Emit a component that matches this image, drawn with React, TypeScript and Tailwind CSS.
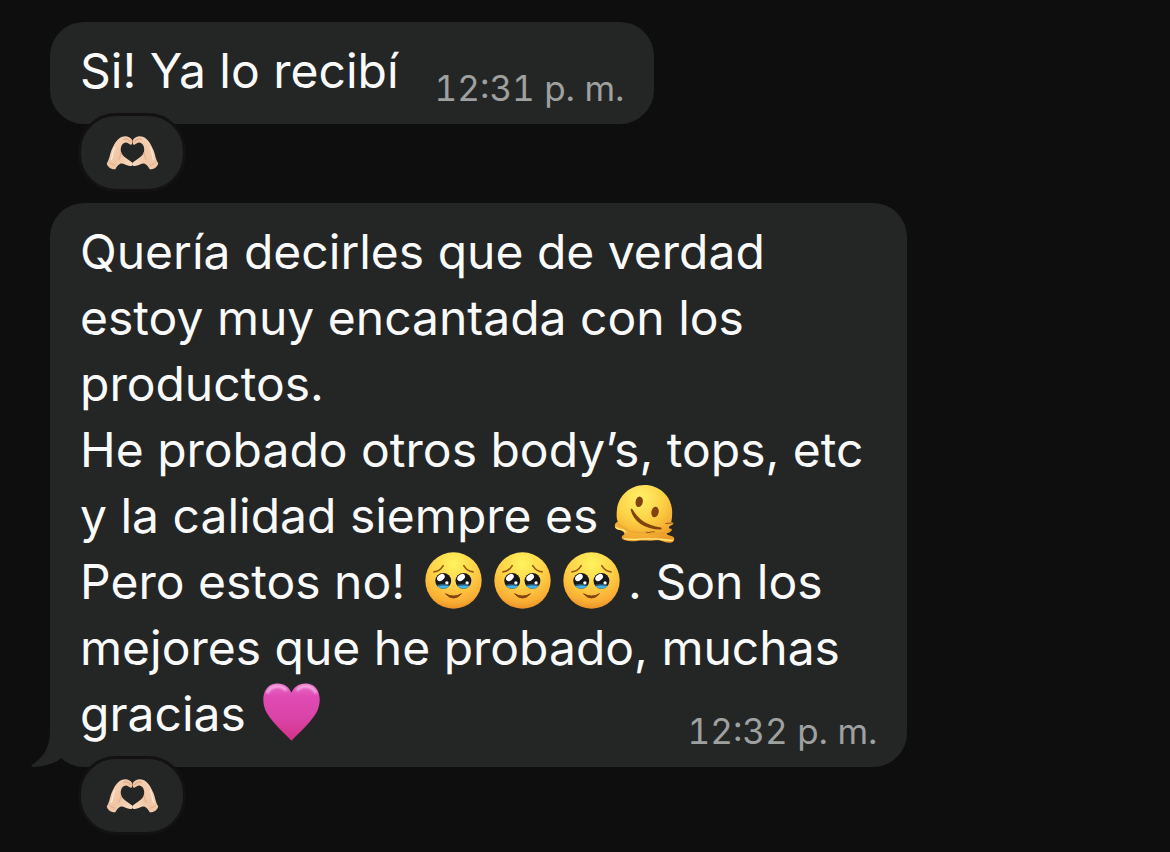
import type { ReactNode } from "react";

function HeartHands() {
  return (
    <svg viewBox="46 44 160 106" className="h-[35px] w-[53px]" role="img" aria-label="Manos formando un corazón">
      <defs>
        <linearGradient id="skin" x1="0" y1="0" x2="1" y2="1">
          <stop offset="0" stopColor="#f8dabf" />
          <stop offset="0.55" stopColor="#f0c5a4" />
          <stop offset="1" stopColor="#fbe0c6" />
        </linearGradient>
        <g id="hand">
          <path
            d="M48 130 C56 119 57 104 62 91 C69 73 80 54 95 49 C106 45 119 49 124 58 C127 64 126 71 122 74 C116 73 112 67 105 67 C94 69 89 81 91 94 C94 109 112 117 125 127 C129 133 125 139 119 138 C108 137 97 128 89 131 C82 134 78 140 74 148 C64 149 51 142 48 130Z"
            fill="url(#skin)"
          />
          <path d="M98 58 C106 53 114 57 121 66" fill="none" stroke="#c48f6e" strokeWidth="2" />
          <path d="M91 96 C91 106 87 112 85 119 M54 126 C61 132 67 134 74 136" fill="none" stroke="#dba885" strokeWidth="2.5" />
          <path d="M72 82 C66 95 66 107 62 118" fill="none" stroke="#ffe8d4" strokeWidth="4" strokeLinecap="round" />
        </g>
      </defs>
      <use href="#hand" />
      <use href="#hand" transform="matrix(-1 0 0 1 252 0)" />
    </svg>
  );
}

function MeltingFace() {
  return (
    <svg viewBox="34 28 184 182" className="-mt-1 inline-block h-[60px] w-[61px] align-middle" role="img" aria-label="Cara derritiéndose">
      <defs>
        <radialGradient id="melt" cx="0.42" cy="0.22" r="0.8">
          <stop offset="0" stopColor="#fff16a" />
          <stop offset="0.5" stopColor="#fdd145" />
          <stop offset="1" stopColor="#ee9c28" />
        </radialGradient>
      </defs>
      <path
        d="M126 31 C173 31 210 67 210 114 C210 126 209 136 207 143 L213 146 C216 151 208 153 202 156 C198 160 201 164 206 164 C211 165 209 171 203 174 L193 178 C193 183 207 184 214 189 C220 198 213 207 201 206 C182 205 175 197 160 199 C142 202 125 198 108 200 C94 202 80 203 67 199 C54 195 54 187 64 182 C67 177 62 171 54 168 C42 168 35 162 36 153 C36 147 42 146 45 142 C41 132 41 122 42 111 C44 66 81 31 126 31Z"
        fill="url(#melt)"
      />
      <path d="M44 145 C48 158 68 158 77 168 C90 179 117 172 138 179 C158 184 170 174 193 178" fill="none" stroke="#e69a2c" strokeWidth="5" opacity="0.5" />
      <path d="M38 159 C50 169 68 164 68 175 M65 194 C91 200 125 192 152 195 C172 191 190 202 213 198" fill="none" stroke="#ffed83" strokeWidth="4" />
      <ellipse cx="110" cy="82" rx="11" ry="16" fill="#81430e" transform="rotate(12 110 82)" />
      <ellipse cx="158" cy="113" rx="11" ry="16" fill="#81430e" transform="rotate(12 158 113)" />
      <path d="M87 106 C95 139 126 162 175 163 C128 155 105 137 87 106Z" fill="#81430e" stroke="#81430e" strokeWidth="6" strokeLinejoin="round" />
      <path d="M131 174 C139 179 148 170 156 173 M191 148 L211 146" fill="none" stroke="#955416" strokeWidth="3" strokeLinecap="round" />
    </svg>
  );
}

function TearyFace() {
  return (
    <svg viewBox="0 0 172 172" className="-mt-1 inline-block h-[57px] w-[57px] align-middle" role="img" aria-label="Cara conteniendo las lágrimas">
      <defs>
        <radialGradient id="face" cx="0.5" cy="0.2" r="0.83">
          <stop offset="0" stopColor="#fff35e" />
          <stop offset="0.45" stopColor="#ffd448" />
          <stop offset="0.82" stopColor="#f9ae34" />
          <stop offset="1" stopColor="#e88a25" />
        </radialGradient>
        <clipPath id="pupil">
          <circle cx="55" cy="87" r="24" />
        </clipPath>
        <g id="eye">
          <circle cx="55" cy="87" r="24" fill="#17181a" />
          <path d="M29 103 Q55 97 81 103 V114 H29Z" fill="#42b3e8" clipPath="url(#pupil)" />
          <path d="M37 100 Q55 95 73 100" fill="none" stroke="#2c607c" strokeWidth="3" />
          <ellipse cx="48" cy="77" rx="13" ry="9" fill="#fff" transform="rotate(-40 48 77)" />
          <circle cx="66" cy="93" r="5" fill="#fff" />
        </g>
      </defs>
      <circle cx="86" cy="86" r="85" fill="url(#face)" />
      <use href="#eye" />
      <use href="#eye" x="61" />
      <path d="M27 60 C39 59 49 51 55 41 M145 60 C133 59 123 51 117 41" fill="none" stroke="#985a18" strokeWidth="5" strokeLinecap="round" />
      <path d="M62 126 Q86 152 110 126 Q86 140 62 126Z" fill="#81430e" stroke="#81430e" strokeWidth="3" strokeLinejoin="round" />
    </svg>
  );
}

function PinkHeart() {
  return (
    <svg viewBox="34 22 178 180" className="-mt-1 inline-block h-[60px] w-[59px] align-middle" role="img" aria-label="Corazón rosa">
      <defs>
        <linearGradient id="pink" x1="0" y1="0" x2="0" y2="1">
          <stop offset="0" stopColor="#e86cc6" />
          <stop offset="0.22" stopColor="#df4bb4" />
          <stop offset="0.6" stopColor="#da44a8" />
          <stop offset="1" stopColor="#d53185" />
        </linearGradient>
        <filter id="soft" x="-20%" y="-50%" width="140%" height="200%">
          <feGaussianBlur stdDeviation="4" />
        </filter>
      </defs>
      <path d="M123 199 C111 184 70 151 49 116 C27 78 38 28 78 26 C101 25 117 38 123 54 C129 38 145 25 168 26 C208 28 219 78 197 116 C176 151 135 184 123 199Z" fill="url(#pink)" />
      <path d="M49 55 C61 29 91 29 108 47 M139 47 C155 29 184 29 198 55" fill="none" stroke="#f7b4e5" strokeWidth="8" filter="url(#soft)" />
    </svg>
  );
}

function Tail() {
  return (
    <svg viewBox="0 0 54 38" className="absolute bottom-0 -left-5 h-[38px] w-[54px] fill-[#242626]" aria-hidden="true">
      <path d="M20 0 C20 17 16 26 2 36 C0 38 3 38 5 38 C16 37 26 34 31 29 L48 24 V0Z" />
    </svg>
  );
}

function Bubble({ children, time, tail = false }: { children: ReactNode; time: string; tail?: boolean }) {
  return (
    <div className="relative flex max-w-full items-end rounded-[34px] bg-[#242626] px-[30px] pt-4 pb-5">
      {tail && <Tail />}
      {children}
      <time
        className={
          tail
            ? "absolute right-[30px] bottom-[12px] text-[35px] leading-[48px] whitespace-nowrap text-[#9fa0a0] tabular-nums"
            : "-mb-2 ml-9 text-[35px] leading-[48px] whitespace-nowrap text-[#9fa0a0] tabular-nums"
        }
      >
        {time}
      </time>
    </div>
  );
}

function Reaction() {
  return (
    <button
      type="button"
      aria-label="Ver reacciones"
      className="relative -mt-[11px] ml-7 flex h-[79px] w-[108px] items-center justify-center rounded-[38px] border-3 border-[#131112] bg-[#242626]"
    >
      <HeartHands />
    </button>
  );
}

export default function App() {
  return (
    <main className="flex min-h-screen flex-col items-start gap-[11px] bg-[#0e0e0e] pt-[22px] pr-4 pl-[50px] font-['Inter',sans-serif] text-[48px] leading-[66px] text-[#fafafa]">
      <article className="max-w-full">
        <Bubble time="12:31 p. m.">
          <p>Si! Ya lo recibí</p>
        </Bubble>
        <Reaction />
      </article>
      <article className="max-w-full">
        <Bubble time="12:32 p. m." tail>
          <p className="pr-3.5">
            <span className="block">Quería decirles que de verdad</span>
            <span className="block">estoy muy encantada con los</span>
            <span className="block">productos.</span>
            <span className="block">He probado otros body’s, tops, etc</span>
            <span className="flex items-center gap-4">y la calidad siempre es <MeltingFace /></span>
            <span className="flex items-center">
              Pero estos no!
              <span className="mr-2 ml-5 flex gap-3">
                <TearyFace />
                <TearyFace />
                <TearyFace />
              </span>
              . Son los
            </span>
            <span className="block">mejores que he probado, muchas</span>
            <span className="flex items-center gap-4">gracias <PinkHeart /></span>
          </p>
        </Bubble>
        <Reaction />
      </article>
    </main>
  );
}
